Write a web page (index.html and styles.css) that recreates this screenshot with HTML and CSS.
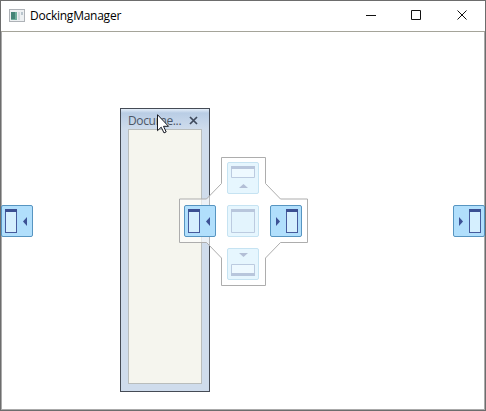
FILE: index.html
```html
<!DOCTYPE html>
<html lang="en">
<head>
<meta charset="utf-8">
<title>DockingManager</title>
<link rel="stylesheet" href="styles.css">
</head>
<body>
<div class="window">
  <header class="titlebar">
    <svg class="app-icon" width="16" height="14" viewBox="0 0 16 14"><rect x=".5" y=".5" width="15" height="12" fill="#edf0f2" stroke="#aeb2b7"/><rect x="2" y="3" width="6" height="8" fill="#6fae9c"/><path d="M2 3h4v7H2z" fill="#438477"/><path d="M9 3h2v8H9z" fill="#d4dce0"/><path d="M12 3h2v3h-2z" fill="#b9c5cd"/></svg>
    <h1 class="title">DockingManager</h1>
    <svg class="controls" width="110" height="29" viewBox="0 0 110 29" fill="none" stroke="#111"><path d="M4 13.5h10M49.5 8.5h9v9h-9zM95.5 8.5l9 9M104.5 8.5l-9 9"/></svg>
  </header>
  <main class="workspace">
    <section class="float-panel">
      <div class="panel-header"><span class="panel-title">Docume...</span><svg width="9" height="9" viewBox="0 0 9 9"><path d="M1 1l7 7M8 1L1 8" stroke="#3f4a5c" stroke-width="1.7"/></svg></div>
      <div class="panel-body"></div>
    </section>
    <svg class="guides" width="486" height="411" viewBox="0 0 486 411">
      <defs>
        <g id="left-guide"><rect x=".5" y=".5" width="31" height="31" rx="1.5" fill="#b1dffc" stroke="#5795c1"/><rect x="4.5" y="4.5" width="11" height="23" fill="#d5effe" stroke="#465b9c"/><path d="M4 4h12v3H4z" fill="#3b5092"/><path d="M26 12v9l-4-4.5z" fill="#3c5195"/></g>
        <g id="right-guide"><rect x=".5" y=".5" width="31" height="31" rx="1.5" fill="#b1dffc" stroke="#5795c1"/><rect x="16.5" y="4.5" width="11" height="23" fill="#d5effe" stroke="#465b9c"/><path d="M16 4h12v3H16z" fill="#3b5092"/><path d="M6 12v9l4-4.5z" fill="#3c5195"/></g>
        <g id="button-base"><rect x=".5" y=".5" width="31" height="31" rx="1.5" fill="#e6f6fe" stroke="#c6e3f2"/></g>
      </defs>
      <path d="M221.5 157.5h44v26l15 15.5h27v43.5h-27l-15 15.5v27.5h-44V258L206.500 242.500h-27V199h27l15-15.500z" fill="#fff" fill-opacity=".6" stroke="#adadad"/>
      <use href="#left-guide" x="1" y="205"/><use href="#right-guide" x="453" y="205"/>
      <use href="#left-guide" x="184" y="205"/><use href="#right-guide" x="270" y="205"/>
      <g transform="translate(227 162)"><use href="#button-base"/><path d="M4.500 4.500h23v11h-23z" fill="#eef9ff" stroke="#bccbe0"/><path d="M4 4h24v3H4z" fill="#b8c6dc"/><path d="M12 26h9l-4.500-4z" fill="#b3bfd6"/></g>
      <g transform="translate(227 205)"><use href="#button-base"/><path d="M4.500 4.500h23v23h-23z" fill="#e3f4fd" stroke="#bccbe0"/><path d="M4 4h24v3H4z" fill="#b8c6dc"/></g>
      <g transform="translate(227 248)"><use href="#button-base"/><path d="M4.500 16.500h23v11h-23z" fill="#eef9ff" stroke="#bccbe0"/><path d="M4 25h24v3H4z" fill="#b8c6dc"/><path d="M12 5h9l-4.500 4z" fill="#b3bfd6"/></g>
    </svg>
    <svg class="cursor" width="13" height="20" viewBox="0 0 13 20"><path d="M.5.7v16l3.700-3.500 2.800 5.700 2.200-1-2.700-5.600h5z" fill="#fff" stroke="#161922"/></svg>
  </main>
</div>
</body>
</html>
```
FILE: styles.css
```css
* { box-sizing: border-box; }
body { margin: 0; overflow: hidden; }
.window { position: relative; width: 486px; height: 411px; display: flex; flex-direction: column; border: 1px solid #6d6d6d; background: #fff; font-family: "Open Sans", "Noto Sans", sans-serif; }
.titlebar { height: 31px; flex: none; display: flex; align-items: flex-start; padding: 1px 13px 0 8px; border-bottom: 1px solid #a5a49a; }
.app-icon { margin-top: 7px; }
.title { margin: 5px auto 0 5px; font-size: 12px; line-height: 18px; font-weight: 400; letter-spacing: -.25px; color: #000; }
.workspace { flex: 1; border: solid #aaa; border-width: 0 1px 1px; background: #fff; }
.float-panel { position: absolute; left: 119px; top: 107px; width: 90px; height: 284px; display: flex; flex-direction: column; padding: 0 7px 7px; border: 1px solid #454b55; background: #cfdcec; }
.panel-header { height: 20px; margin: 0 -7px; padding: 3px 11px 0 7px; display: flex; align-items: center; justify-content: space-between; background: linear-gradient(#e4eef9, #b9cde5 4px, #cfdcec); }
.panel-title { font-size: 12px; line-height: 18px; letter-spacing: -.35px; color: #4c5666; }
.panel-body { flex: 1; border: 1px solid #b9bdbc; background: #f5f5ee; }
.guides { position: absolute; left: -1px; top: -1px; }
.cursor { position: absolute; left: 156px; top: 113px; }
```
